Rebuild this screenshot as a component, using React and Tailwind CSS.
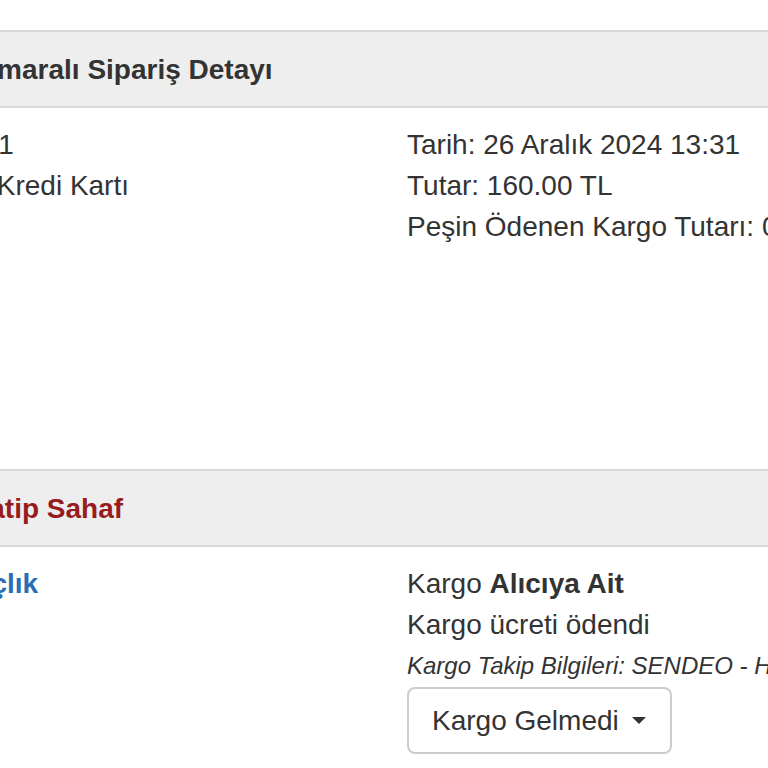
export default function App() {
  const font = { fontFamily: '"Liberation Sans", Arial, Helvetica, sans-serif' };
  return (
    <div
      className="w-full h-screen overflow-hidden bg-white text-[#333333] text-[28px] leading-[41px]"
      style={font}
    >
      <div className="pt-[30px]">
        {/* Panel 1 */}
        <div className="h-[78px] border-t-2 border-b-2 border-[#d9d9d9] bg-[#eeeeee] flex items-center">
          <h3 className="-ml-[157px] whitespace-nowrap font-bold text-[28px] text-[#333333]">
            1234567 Numaralı Sipariş Detayı
          </h3>
        </div>
        <div className="h-[361px] pt-[16px] flex -ml-[162px] whitespace-nowrap">
          <div className="w-[569px] shrink-0">
            <div>Sipariş No: 21</div>
            <div>Ödeme Tipi: Kredi Kartı</div>
          </div>
          <div className="shrink-0">
            <div>Tarih: 26 Aralık 2024 13:31</div>
            <div>Tutar: 160.00 TL</div>
            <div>Peşin Ödenen Kargo Tutarı: 0.00 TL</div>
          </div>
        </div>

        {/* Panel 2 */}
        <div className="h-[78px] border-t-2 border-b-2 border-[#d9d9d9] bg-[#eeeeee] flex items-center">
          <h3 className="-ml-[157px] whitespace-nowrap font-bold text-[28px] text-[#981b1e]">
            Mağaza - Katip Sahaf
          </h3>
        </div>
        <div className="pt-[16px] flex -ml-[162px] whitespace-nowrap">
          <div className="w-[569px] shrink-0">
            <a className="font-bold text-[#2a6db5]">Ürün Adı: Açlık</a>
          </div>
          <div className="shrink-0">
            <div>
              Kargo <span className="font-bold">Alıcıya Ait</span>
            </div>
            <div>Kargo ücreti ödendi</div>
            <div className="italic text-[24px] leading-[42px]">
              Kargo Takip Bilgileri: SENDEO - HZ123456789
            </div>
            <button
              type="button"
              className="h-[67px] w-[265px] border-2 border-[#cccccc] rounded-[8px] bg-white flex items-center pl-[23px] text-[28px] text-[#333333]"
            >
              <span>Kargo Gelmedi</span>
              <span className="ml-[13px] w-0 h-0 border-l-[7px] border-r-[7px] border-t-[7px] border-l-transparent border-r-transparent border-t-[#333333]"></span>
            </button>
          </div>
        </div>
      </div>
    </div>
  );
}
